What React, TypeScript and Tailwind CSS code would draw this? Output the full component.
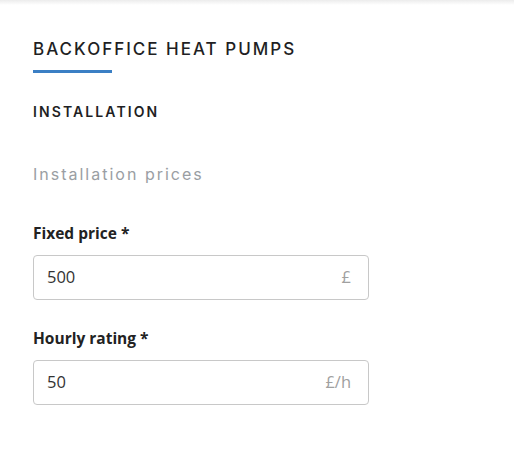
export default function App() {
  const fields = [
    { label: "Fixed price *", value: "500", unit: "£" },
    { label: "Hourly rating *", value: "50", unit: "£/h" },
  ];

  return (
    <div className="min-h-screen bg-white relative">
      <div className="absolute top-0 left-0 right-0 h-[5px] bg-gradient-to-b from-[#ececec] to-white" />
      <div className="pl-[33px] pt-[36px] w-[370px]">
        <h1 className="text-[17px] leading-[26px] tracking-[2px] text-[#1f1f24] font-medium" style={{ fontFamily: "Inter, 'Noto Sans', sans-serif" }}>
          BACKOFFICE HEAT PUMPS
        </h1>
        <div className="mt-[8px] h-[3px] w-[79px] bg-[#3b7fc4]" />
        <h2 className="mt-[29px] text-[14px] leading-[20px] tracking-[2.1px] font-semibold text-[#1f1f24]" style={{ fontFamily: "Inter, 'Noto Sans', sans-serif" }}>
          INSTALLATION
        </h2>
        <h3 className="mt-[40px] text-[16px] leading-[24px] tracking-[2px] text-[#9a9ea3]" style={{ fontFamily: "Inter, 'Noto Sans', sans-serif" }}>
          Installation prices
        </h3>
        <div className="mt-[36px] flex flex-col gap-[27px]">
          {fields.map((f) => (
            <div key={f.label} className="flex flex-col">
              <label className="text-[15.5px] leading-[22px] font-bold text-[#222]" style={{ fontFamily: "'Open Sans', sans-serif" }}>
                {f.label}
              </label>
              <div className="mt-[11px] h-[45px] w-[336px] border border-[#c8c8c8] rounded-[4px] flex items-center justify-between pl-[13px] pr-[17px]" style={{ fontFamily: "'Open Sans', sans-serif" }}>
                <span className="text-[16.5px] text-[#333]">{f.value}</span>
                <span className="text-[16.5px] text-[#a0a0a0]">{f.unit}</span>
              </div>
            </div>
          ))}
        </div>
      </div>
    </div>
  );
}
